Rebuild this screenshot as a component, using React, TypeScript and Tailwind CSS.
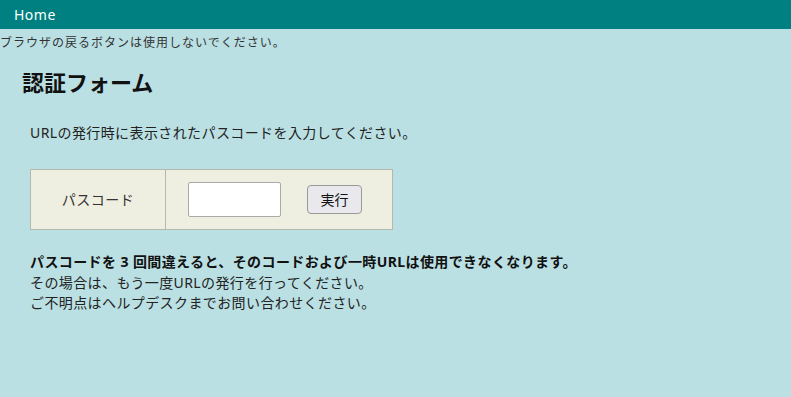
import React from "react";

export default function App() {
  return (
    <div
      className="w-[791px] h-[397px] bg-[#bbe0e3] text-[#222] overflow-hidden"
      style={{ fontFamily: '"Noto Sans", "Noto Sans CJK JP", sans-serif' }}
    >
      <div className="h-[29px] bg-[#008080] text-white text-[14px] tracking-[0.5px] pl-[14px] flex items-center">
        Home
      </div>
      <div className="text-[12px] tracking-[1px] leading-[15px] mt-[6px] text-[#333]">
        ブラウザの戻るボタンは使用しないでください。
      </div>
      <h1 className="text-[22px] font-bold leading-[28px] ml-[22px] mt-[18px] text-[#111]">
        認証フォーム
      </h1>
      <p className="text-[14px] tracking-[0.4px] leading-[18px] ml-[30px] mt-[28px] text-[#222]">
        URLの発行時に表示されたパスコードを入力してください。
      </p>
      <div className="ml-[30px] mt-[27px] w-[363px] h-[61px] flex border border-[#b5b9ad] bg-[#eeefe1]">
        <div className="w-[135px] flex items-center justify-center border-r border-[#b5b9ad] text-[14px] tracking-[0.5px] text-[#333]">
          パスコード
        </div>
        <div className="flex items-center pl-[22px]">
          <input
            type="text"
            className="w-[93px] h-[35px] bg-white border border-[#aaa] rounded-[2px] outline-none"
          />
          <button className="ml-[26px] w-[55px] h-[29px] border border-[#999] rounded-[4px] bg-[#e8e8ed] text-[14px] text-[#111] flex items-center justify-center">
            実行
          </button>
        </div>
      </div>
      <div className="ml-[30px] mt-[22px] text-[14px] tracking-[0.4px] leading-[20.5px]">
        <div className="font-bold text-[#111]">
          パスコードを 3 回間違えると、そのコードおよび一時URLは使用できなくなります。
        </div>
        <div>その場合は、もう一度URLの発行を行ってください。</div>
        <div>ご不明点はヘルプデスクまでお問い合わせください。</div>
      </div>
    </div>
  );
}
